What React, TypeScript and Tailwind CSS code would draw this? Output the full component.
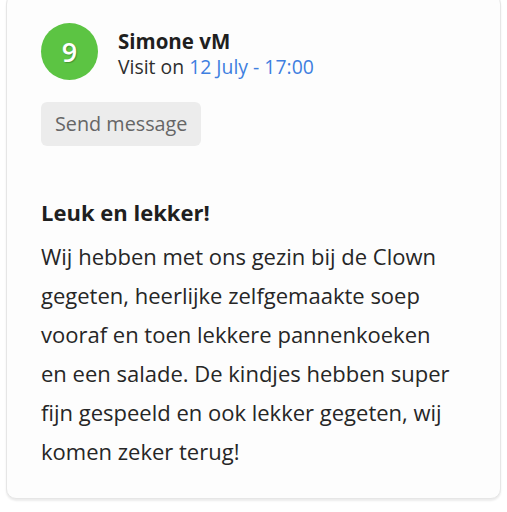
import React from 'react';

const review = {
  score: 9,
  name: 'Simone vM',
  visit: '12 July - 17:00',
  title: 'Leuk en lekker!',
  body: 'Wij hebben met ons gezin bij de Clown gegeten, heerlijke zelfgemaakte soep vooraf en toen lekkere pannenkoeken en een salade. De kindjes hebben super fijn gespeeld en ook lekker gegeten, wij komen zeker terug!',
};

const App: React.FC = () => {
  return (
    <div className="min-h-[512px] bg-white pt-0" style={{ fontFamily: '"Open Sans", "Noto Sans", sans-serif' }}>
      <div className="mx-[6px] -mt-[6px] w-[495px] rounded-[10px] border border-[#e6e6e6] bg-[#fdfdfd] pl-[34px] pr-[40px] pt-[28px] pb-[27px] shadow-[0_2px_2px_rgba(0,0,0,0.08)]">
        <div className="flex items-center gap-[20px]">
          <div className="flex h-[57px] w-[57px] shrink-0 items-center justify-center rounded-full bg-[#5cc443]">
            <span className="text-[27px] font-semibold leading-none text-white [text-shadow:1px_1px_1px_rgba(0,0,0,0.25)]">
              {review.score}
            </span>
          </div>
          <div className="mt-[4px] flex flex-col">
            <span className="text-[20.5px] font-bold leading-[26px] text-[#1f1f1f]">{review.name}</span>
            <span className="text-[19.4px] leading-[26px] text-[#2e2e2e]">
              Visit on <span className="text-[#3f7fe0]">{review.visit}</span>
            </span>
          </div>
        </div>

        <button className="mt-[22px] h-[44px] rounded-[6px] bg-[#ececec] px-[14px] text-[19.8px] text-[#666]">
          Send message
        </button>

        <h3 className="mt-[53px] text-[22px] font-bold leading-[26px] text-[#1f1f1f]">{review.title}</h3>
        <p className="mt-[12px] text-[22px] leading-[39px] text-[#262626]">{review.body}</p>
      </div>
    </div>
  );
};

export default App;
